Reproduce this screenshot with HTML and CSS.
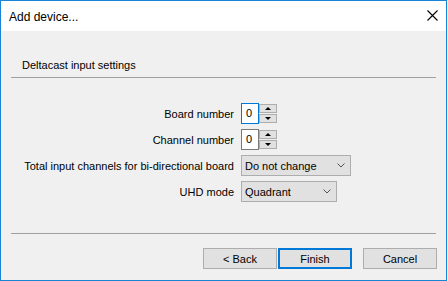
FILE: index.html
```html
<!DOCTYPE html>
<html>
<head>
<meta charset="utf-8">
<link rel="stylesheet" href="styles.css">
</head>
<body>
<div class="window">
  <div class="titlebar">
    <span class="title">Add device...</span>
    <svg class="close" width="11" height="11" viewBox="0 0 11 11"><path d="M0.5 0.5 L10.5 10.5 M10.5 0.5 L0.5 10.5" stroke="#000" stroke-width="1.1" fill="none"/></svg>
  </div>
  <div class="content">
    <div class="heading">Deltacast input settings</div>
    <div class="sep"></div>
    <div class="form">
      <label class="lbl">Board number</label>
      <div class="spin focus">
        <div class="spin-field">0</div>
        <div class="spin-btns"><div class="spin-btn"><span class="tri-up"></span></div><div class="spin-btn"><span class="tri-down"></span></div></div>
      </div>
      <label class="lbl">Channel number</label>
      <div class="spin">
        <div class="spin-field">0</div>
        <div class="spin-btns"><div class="spin-btn"><span class="tri-up"></span></div><div class="spin-btn"><span class="tri-down"></span></div></div>
      </div>
      <label class="lbl">Total input channels for bi-directional board</label>
      <div class="combo combo-wide"><span>Do not change</span><svg class="chev" width="8" height="5" viewBox="0 0 8 5"><polyline points="0.5,0.5 4,4 7.5,0.5" stroke="#555" stroke-width="1" fill="none"/></svg></div>
      <label class="lbl">UHD mode</label>
      <div class="combo combo-narrow"><span>Quadrant</span><svg class="chev" width="8" height="5" viewBox="0 0 8 5"><polyline points="0.5,0.5 4,4 7.5,0.5" stroke="#555" stroke-width="1" fill="none"/></svg></div>
    </div>
    <div class="sep sep-bottom"></div>
    <div class="buttons">
      <div class="btn">&lt; Back</div>
      <div class="btn btn-default">Finish</div>
      <div class="btn btn-cancel">Cancel</div>
    </div>
  </div>
</div>
</body>
</html>
```
FILE: styles.css
```css
html, body {
  margin: 0;
  padding: 0;
  background: #ffffff;
}
body {
  font-family: "Liberation Sans", Arial, sans-serif;
  font-size: 11px;
  color: #000;
}
.window {
  width: 447px;
  height: 281px;
  box-sizing: border-box;
  border: 1px solid #1883d7;
  display: flex;
  flex-direction: column;
  background: #f0f0f0;
}
.titlebar {
  height: 30px;
  flex: none;
  background: #ffffff;
  display: flex;
  align-items: center;
  padding-left: 8px;
  padding-right: 8px;
}
.title {
  font-size: 12px;
  flex: 1;
  margin-top: 1px;
}
.close {
  display: block;
  margin-top: -1px;
}
.content {
  flex: 1;
  display: flex;
  flex-direction: column;
}
.heading {
  margin-top: 26px;
  padding-left: 21px;
  line-height: 16px;
  height: 16px;
}
.sep {
  height: 1px;
  background: #a0a0a0;
  margin: 4px 10px 0 10px;
}
.form {
  margin-top: 25px;
  display: grid;
  grid-template-columns: 233px auto;
  column-gap: 7px;
  row-gap: 5px;
  grid-auto-rows: 21px;
  align-items: center;
  justify-items: start;
}
.lbl {
  justify-self: end;
  line-height: 14px;
}
.spin {
  display: flex;
  width: 36px;
  height: 21px;
}
.spin-field {
  width: 18px;
  box-sizing: border-box;
  border: 1px solid #7a7a7a;
  background: #fff;
  padding-left: 4px;
  line-height: 19px;
}
.spin.focus .spin-field {
  border-color: #0078d7;
}
.spin-btns {
  width: 18px;
  display: flex;
  flex-direction: column;
  gap: 1px;
  padding: 1px 0 1px 0;
  box-sizing: border-box;
}
.spin-btn {
  flex: 1;
  border: 1px solid #adadad;
  background: #e1e1e1;
  display: flex;
  align-items: center;
  justify-content: center;
}
.tri-up {
  width: 0;
  height: 0;
  border-left: 3px solid transparent;
  border-right: 3px solid transparent;
  border-bottom: 3px solid #000;
}
.tri-down {
  width: 0;
  height: 0;
  border-left: 3px solid transparent;
  border-right: 3px solid transparent;
  border-top: 3px solid #000;
}
.combo {
  height: 21px;
  box-sizing: border-box;
  border: 1px solid #adadad;
  background: #e1e1e1;
  display: flex;
  align-items: center;
  padding-left: 3px;
  padding-right: 5px;
}
.combo span {
  flex: 1;
}
.combo-wide {
  width: 110px;
}
.combo-narrow {
  width: 96px;
}
.chev {
  display: block;
}
.sep-bottom {
  margin-top: 31px;
}
.buttons {
  margin-top: 14px;
  display: flex;
  justify-content: flex-end;
  padding-right: 9px;
}
.btn {
  width: 74px;
  height: 21px;
  box-sizing: border-box;
  border: 1px solid #adadad;
  background: #e1e1e1;
  display: flex;
  align-items: center;
  justify-content: center;
}
.btn-default {
  border: 2px solid #0078d7;
  margin-left: 1px;
}
.btn-cancel {
  margin-left: 11px;
}
```
